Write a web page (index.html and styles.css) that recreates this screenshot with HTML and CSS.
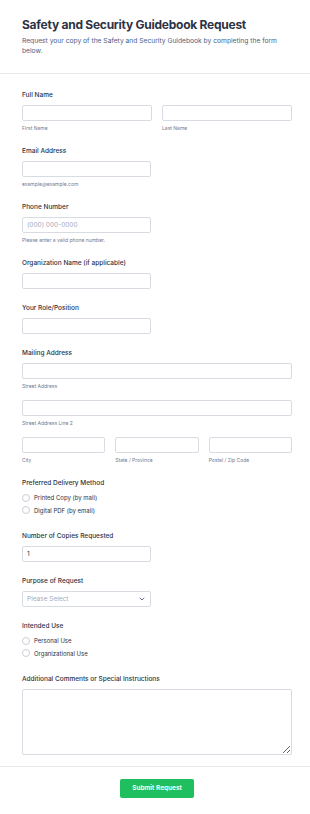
FILE: index.html
```html
<!DOCTYPE html>
<html lang="en">
<head>
  <meta charset="UTF-8" />
  <meta name="viewport" content="width=device-width, initial-scale=1.0"/>
  <title>Safety and Security Guidebook Request</title>
  <link rel="stylesheet" href="styles.css">
</head>
<body>
  <div class="header">
    <h1>Safety and Security Guidebook Request</h1>
    <p class="subtitle">Request your copy of the Safety and Security Guidebook by completing the form below.</p>
  </div>

  <form class="form">
    <div class="field">
      <label class="label">Full Name</label>
      <div class="row two">
        <div>
          <input class="input" type="text">
          <span class="sublabel">First Name</span>
        </div>
        <div>
          <input class="input" type="text">
          <span class="sublabel">Last Name</span>
        </div>
      </div>
    </div>

    <div class="field">
      <label class="label">Email Address</label>
      <input class="input half" type="email">
      <span class="sublabel">example@example.com</span>
    </div>

    <div class="field">
      <label class="label">Phone Number</label>
      <input class="input half" type="tel" placeholder="(000) 000-0000">
      <span class="sublabel">Please enter a valid phone number.</span>
    </div>

    <div class="field">
      <label class="label">Organization Name (if applicable)</label>
      <input class="input half" type="text">
    </div>

    <div class="field">
      <label class="label">Your Role/Position</label>
      <input class="input half" type="text">
    </div>

    <div class="field">
      <label class="label">Mailing Address</label>
      <div class="address">
        <div>
          <input class="input" type="text">
          <span class="sublabel">Street Address</span>
        </div>
        <div>
          <input class="input" type="text">
          <span class="sublabel">Street Address Line 2</span>
        </div>
        <div class="row three">
          <div>
            <input class="input" type="text">
            <span class="sublabel">City</span>
          </div>
          <div>
            <input class="input" type="text">
            <span class="sublabel">State / Province</span>
          </div>
          <div>
            <input class="input" type="text">
            <span class="sublabel">Postal / Zip Code</span>
          </div>
        </div>
      </div>
    </div>

    <div class="field">
      <label class="label">Preferred Delivery Method</label>
      <div class="radios">
        <label class="radio"><span class="dot"></span>Printed Copy (by mail)</label>
        <label class="radio"><span class="dot"></span>Digital PDF (by email)</label>
      </div>
    </div>

    <div class="field">
      <label class="label">Number of Copies Requested</label>
      <input class="input half" type="number" value="1">
    </div>

    <div class="field">
      <label class="label">Purpose of Request</label>
      <div class="select half">
        <span>Please Select</span>
        <svg width="6" height="4" viewBox="0 0 6 4"><path d="M1 1l2 2 2-2" fill="none" stroke="#57647e" stroke-width="0.9" stroke-linecap="round" stroke-linejoin="round"/></svg>
      </div>
    </div>

    <div class="field">
      <label class="label">Intended Use</label>
      <div class="radios">
        <label class="radio"><span class="dot"></span>Personal Use</label>
        <label class="radio"><span class="dot"></span>Organizational Use</label>
      </div>
    </div>

    <div class="field last">
      <label class="label">Additional Comments or Special Instructions</label>
      <textarea class="input textarea"></textarea>
    </div>
  </form>

  <div class="footer">
    <button class="submit" type="button">Submit Request</button>
  </div>
</body>
</html>
```

FILE: styles.css
```css
* {
  box-sizing: border-box;
  margin: 0;
  padding: 0;
}

body {
  font-family: Inter, "Noto Sans", sans-serif;
  background: #fff;
  color: #2c3345;
  width: 310px;
}

.header {
  padding: 17px 18px 17px 22px;
  border-bottom: 1px solid #e6e8ee;
}

h1 {
  font-size: 12px;
  line-height: 16px;
  font-weight: 700;
  letter-spacing: -0.25px;
  color: #2c3345;
}

.subtitle {
  margin-top: 2.5px;
  font-size: 6.7px;
  line-height: 10px;
  color: #4a5e85;
}

.form {
  padding: 16px 18px 11px 22px;
  border-bottom: 1px solid #e6e8ee;
}

.field {
  margin-bottom: 14px;
}

.field.last {
  margin-bottom: 0;
}

.label {
  display: block;
  font-size: 6.5px;
  line-height: 10px;
  font-weight: 500;
  color: #2c3345;
  margin-bottom: 5px;
}

.input {
  display: block;
  width: 100%;
  height: 16px;
  border: 1px solid #d8dbe2;
  border-radius: 2px;
  background: #fff;
  padding: 0 4px;
  font-family: Inter, sans-serif;
  font-size: 6.5px;
  color: #2c3345;
  outline: none;
}

.input::placeholder {
  color: #a4aabb;
}

.input::-webkit-inner-spin-button {
  -webkit-appearance: none;
}

.half {
  width: 129px;
}

.sublabel {
  display: block;
  margin-top: 4px;
  font-size: 5px;
  line-height: 7px;
  color: #6f7a92;
}

.row {
  display: grid;
  gap: 10px;
}

.row.two {
  grid-template-columns: 1fr 1fr;
}

.row.three {
  grid-template-columns: 1fr 1fr 1fr;
}

.address {
  display: flex;
  flex-direction: column;
  gap: 10px;
}

.radios {
  margin-top: -1px;
}

.radio {
  display: flex;
  align-items: center;
  height: 12.5px;
  font-size: 6px;
  color: #2c3345;
}

.dot {
  width: 8px;
  height: 8px;
  border: 1px solid #c9ced8;
  border-radius: 50%;
  margin-right: 4px;
}

.select {
  height: 16px;
  border: 1px solid #d8dbe2;
  border-radius: 2px;
  display: flex;
  align-items: center;
  justify-content: space-between;
  padding: 0 5px 0 4px;
  font-size: 6.5px;
  color: #a4aabb;
}

.textarea {
  height: 66px;
  resize: vertical;
  padding: 4px;
}

.footer {
  display: flex;
  justify-content: center;
  padding: 12px 18px 17px 22px;
}

.submit {
  width: 74px;
  height: 19px;
  border: none;
  border-radius: 2px;
  background: #1fbf5f;
  color: #fff;
  font-family: Inter, sans-serif;
  font-size: 6.5px;
  font-weight: 600;
}
```
